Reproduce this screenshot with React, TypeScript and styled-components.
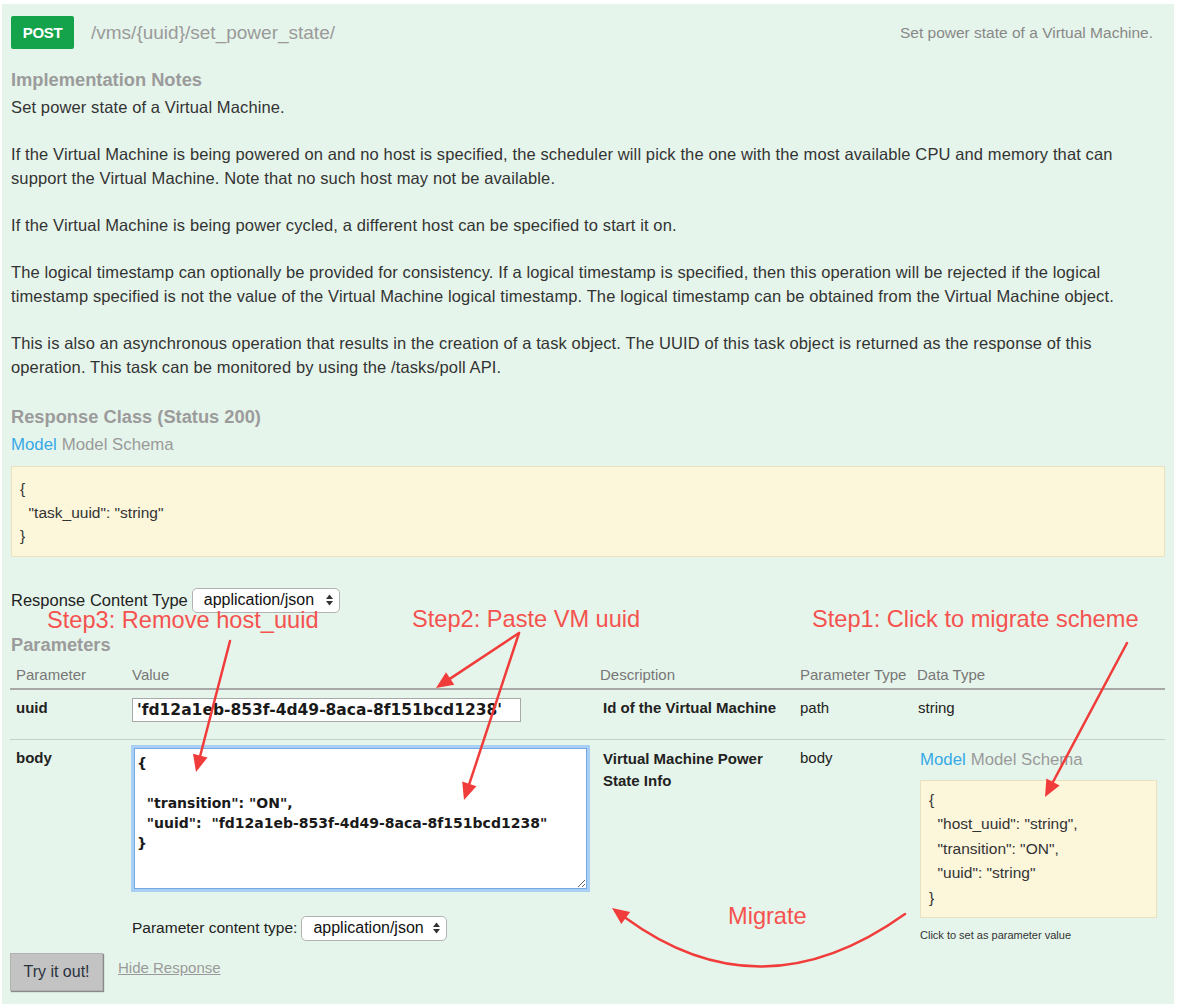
import React from "react";
import styled, { createGlobalStyle } from "styled-components";

const GlobalStyle = createGlobalStyle`
  html, body { margin: 0; padding: 0; background: #fff; }
  body { font-family: "Liberation Sans", Arial, Helvetica, sans-serif; color: #333; }
  * { box-sizing: border-box; }
`;

const Page = styled.div`
  position: relative;
  width: 1178px;
  min-height: 1004px;
  padding: 4px 4px 0 2px;
  display: flex;
`;

const Panel = styled.div`
  flex: 1;
  background: #e6f5eb;
  padding: 12px 9px 20px 9px;
  display: flex;
  flex-direction: column;
`;

const HeaderRow = styled.div`
  display: flex;
  align-items: center;
  height: 33px;
`;

const Badge = styled.span`
  display: inline-flex;
  align-items: center;
  justify-content: center;
  width: 63px;
  height: 33px;
  background: #14a34b;
  color: #fff;
  font-weight: 700;
  font-size: 15px;
  border-radius: 2px;
  letter-spacing: -0.3px;
`;

const PathText = styled.span`
  margin-left: 17px;
  font-size: 19px;
  color: #9a9a9a;
`;

const Summary = styled.span`
  margin-left: auto;
  margin-right: 12px;
  font-size: 15.5px;
  color: #888;
`;

const SectionTitle = styled.h4<{ $mt: number }>`
  margin: ${(p) => p.$mt}px 0 0 0;
  font-size: 18.3px;
  line-height: 22px;
  font-weight: 700;
  color: #9b9b9b;
`;

const Notes = styled.div`
  margin-top: 4px;
  display: flex;
  flex-direction: column;
  gap: 23px;
`;

const Para = styled.p`
  margin: 0;
  font-size: 16.5px;
  letter-spacing: 0.12px;
  line-height: 24px;
  color: #333;
  white-space: nowrap;
`;

const ModelTabs = styled.div<{ $mt: number }>`
  margin-top: ${(p) => p.$mt}px;
  font-size: 16.8px;
  line-height: 22px;
  display: flex;
  gap: 5px;
`;

const Tab = styled.span<{ $active?: boolean }>`
  color: ${(p) => (p.$active ? "#36a9e8" : "#9a9a9a")};
`;

const SchemaBox = styled.div<{ $compact?: boolean }>`
  margin-top: ${(p) => (p.$compact ? 9 : 10)}px;
  background: #fcf6db;
  border: 1px solid #e9e1c0;
  padding: ${(p) => (p.$compact ? "7px 8px" : "10px 8px 8px")};
  font-size: 15.5px;
  line-height: ${(p) => (p.$compact ? "24.5px" : "23.5px")};
  white-space: pre;
  color: #333;
`;

const ContentTypeRow = styled.div<{ $mt: number }>`
  margin-top: ${(p) => p.$mt}px;
  display: flex;
  align-items: center;
  gap: 4px;
`;

const FieldLabel = styled.span<{ $size: number }>`
  font-size: ${(p) => p.$size}px;
  color: #222;
`;

const FakeSelect = styled.div<{ $w: number }>`
  width: ${(p) => p.$w}px;
  height: 25px;
  display: inline-flex;
  align-items: center;
  justify-content: space-between;
  padding: 0 6px 0 11px;
  border: 1px solid #b3b3b3;
  border-radius: 5px;
  background: #fff;
  font-size: 16px;
  color: #111;
`;

const cols = "116px 468px 200px 117px 1fr";

const TableHead = styled.div`
  margin-left: -1px;
  display: grid;
  grid-template-columns: ${cols};
  border-bottom: 2px solid #a8a8a8;
  padding: 9px 0 3px;
`;

const HeadCell = styled.div`
  padding-left: 6px;
  font-size: 15px;
  line-height: 20px;
  color: #777;
  white-space: nowrap;
`;

const Row = styled.div<{ $divider?: boolean; $pb: number }>`
  margin-left: -1px;
  display: grid;
  grid-template-columns: ${cols};
  align-items: start;
  padding: 8px 0 ${(p) => p.$pb}px;
  border-bottom: ${(p) => (p.$divider ? "1px solid #c8cfc9" : "none")};
`;

const Cell = styled.div<{ $bold?: boolean; $lh?: number; $pl?: number }>`
  padding-left: ${(p) => p.$pl ?? 6}px;
  font-size: 15px;
  line-height: ${(p) => p.$lh ?? 20}px;
  font-weight: ${(p) => (p.$bold ? 700 : 400)};
  color: #222;
  display: flex;
  flex-direction: column;
  align-items: flex-start;
`;

const TextInput = styled.input`
  width: 389px;
  height: 24px;
  border: 1px solid #a9a9a9;
  background: #fff;
  padding: 0 4px;
  font-family: "DejaVu Sans", "Liberation Sans", sans-serif;
  font-size: 15.5px;
  font-weight: 700;
  color: #1a1a1a;
  outline: none;
`;

const BodyArea = styled.textarea`
  width: 453px;
  height: 141px;
  margin-left: 2px;
  border: 1px solid #74a9e4;
  box-shadow: 0 0 0 3px #a9cff5;
  background: #fff;
  padding: 4px 2px;
  font-family: "DejaVu Sans", "Liberation Sans", sans-serif;
  font-size: 14px;
  font-weight: 700;
  line-height: 20px;
  color: #1a1a1a;
  outline: none;
`;

const ClickHint = styled.div`
  margin-top: 10px;
  font-size: 11px;
  line-height: 14px;
  color: #333;
`;

const Actions = styled.div`
  margin-top: 7px;
  margin-left: -1px;
  display: flex;
  align-items: flex-start;
  gap: 15px;
`;

const TryButton = styled.button`
  width: 93px;
  height: 38px;
  background: #c3c3c3;
  border: 1px solid #b2b2b2;
  border-radius: 0;
  box-shadow: 1px 1px 1px #8a8a8a;
  font-family: "Liberation Sans", Arial, sans-serif;
  font-size: 16px;
  color: #2a3240;
  padding: 0;
`;

const HideLink = styled.a`
  margin-top: 5px;
  font-size: 15px;
  line-height: 20px;
  color: #9a9a9a;
  text-decoration: underline;
`;

const Overlay = styled.div`
  position: absolute;
  inset: 0;
  pointer-events: none;
`;

const Note = styled.span<{ $x: number; $y: number }>`
  position: absolute;
  left: ${(p) => p.$x}px;
  top: ${(p) => p.$y}px;
  font-size: 23.6px;
  line-height: 24px;
  color: #f5524f;
  white-space: nowrap;
`;

const ArrowSvg = styled.svg`
  position: absolute;
  left: 0;
  top: 0;
`;

const RED = "#f03c3a";

function head(tx: number, ty: number, dx: number, dy: number) {
  const len = Math.hypot(dx, dy);
  const ux = dx / len;
  const uy = dy / len;
  const L = 17;
  const W = 7.5;
  const bx = tx - ux * L;
  const by = ty - uy * L;
  const px = -uy * W;
  const py = ux * W;
  return {
    points: `${tx},${ty} ${bx + px},${by + py} ${bx - px},${by - py}`,
    bx,
    by,
  };
}

function Arrow({ x1, y1, x2, y2 }: { x1: number; y1: number; x2: number; y2: number }) {
  const h = head(x2, y2, x2 - x1, y2 - y1);
  return (
    <g>
      <line x1={x1} y1={y1} x2={h.bx} y2={h.by} stroke={RED} strokeWidth={2.5} strokeLinecap="round" />
      <polygon points={h.points} fill={RED} />
    </g>
  );
}

function CurveArrow() {
  const p0 = [905, 914];
  const p1 = [761, 1017];
  const p2 = [612, 908];
  const h = head(p2[0], p2[1], p2[0] - p1[0], p2[1] - p1[1]);
  return (
    <g>
      <path
        d={`M ${p0[0]} ${p0[1]} Q ${p1[0]} ${p1[1]} ${h.bx} ${h.by}`}
        stroke={RED}
        strokeWidth={2.5}
        fill="none"
        strokeLinecap="round"
      />
      <polygon points={h.points} fill={RED} />
    </g>
  );
}

const SelectArrows = () => (
  <svg width="7" height="12" viewBox="0 0 7 12">
    <polygon points="0,5 3.5,0.5 7,5" fill="#333" />
    <polygon points="0,7 3.5,11.5 7,7" fill="#333" />
  </svg>
);

const bodyJson = `{

  "transition": "ON",
  "uuid":  "fd12a1eb-853f-4d49-8aca-8f151bcd1238"
}`;

export default function App() {
  return (
    <>
      <GlobalStyle />
      <Page>
        <Panel>
          <HeaderRow>
            <Badge>POST</Badge>
            <PathText>/vms/{"{uuid}"}/set_power_state/</PathText>
            <Summary>Set power state of a Virtual Machine.</Summary>
          </HeaderRow>

          <SectionTitle $mt={20}>Implementation Notes</SectionTitle>
          <Notes>
            <Para>Set power state of a Virtual Machine.</Para>
            <Para>
              If the Virtual Machine is being powered on and no host is specified, the scheduler will pick the one with the most available CPU and memory that can
              <br />
              support the Virtual Machine. Note that no such host may not be available.
            </Para>
            <Para>If the Virtual Machine is being power cycled, a different host can be specified to start it on.</Para>
            <Para>
              The logical timestamp can optionally be provided for consistency. If a logical timestamp is specified, then this operation will be rejected if the logical
              <br />
              timestamp specified is not the value of the Virtual Machine logical timestamp. The logical timestamp can be obtained from the Virtual Machine object.
            </Para>
            <Para>
              This is also an asynchronous operation that results in the creation of a task object. The UUID of this task object is returned as the response of this
              <br />
              operation. This task can be monitored by using the /tasks/poll API.
            </Para>
          </Notes>

          <SectionTitle $mt={27}>Response Class (Status 200)</SectionTitle>
          <ModelTabs $mt={6}>
            <Tab $active>Model</Tab>
            <Tab>Model Schema</Tab>
          </ModelTabs>
          <SchemaBox>{`{\n  "task_uuid": "string"\n}`}</SchemaBox>

          <ContentTypeRow $mt={31}>
            <FieldLabel $size={16.5}>Response Content Type</FieldLabel>
            <FakeSelect $w={148}>
              application/json
              <SelectArrows />
            </FakeSelect>
          </ContentTypeRow>

          <SectionTitle $mt={21}>Parameters</SectionTitle>
          <TableHead>
            <HeadCell>Parameter</HeadCell>
            <HeadCell>Value</HeadCell>
            <HeadCell>Description</HeadCell>
            <HeadCell>Parameter Type</HeadCell>
            <HeadCell>Data Type</HeadCell>
          </TableHead>

          <Row $divider $pb={17}>
            <Cell $bold>uuid</Cell>
            <Cell>
              <TextInput readOnly defaultValue="'fd12a1eb-853f-4d49-8aca-8f151bcd1238'" />
            </Cell>
            <Cell $bold $pl={9}>Id of the Virtual Machine</Cell>
            <Cell>path</Cell>
            <Cell $pl={7}>string</Cell>
          </Row>

          <Row $pb={4}>
            <Cell $bold>body</Cell>
            <Cell>
              <BodyArea readOnly defaultValue={bodyJson} />
              <ContentTypeRow $mt={27}>
                <FieldLabel $size={15.5}>Parameter content type:</FieldLabel>
                <FakeSelect $w={146}>
                  application/json
                  <SelectArrows />
                </FakeSelect>
              </ContentTypeRow>
            </Cell>
            <Cell $bold $lh={22} $pl={9}>
              Virtual Machine Power
              <br />
              State Info
            </Cell>
            <Cell>body</Cell>
            <Cell $pl={9} $lh={22}>
              <ModelTabs $mt={1}>
                <Tab $active>Model</Tab>
                <Tab>Model Schema</Tab>
              </ModelTabs>
              <SchemaBox $compact style={{ width: 237 }}>
                {`{\n  "host_uuid": "string",\n  "transition": "ON",\n  "uuid": "string"\n}`}
              </SchemaBox>
              <ClickHint>Click to set as parameter value</ClickHint>
            </Cell>
          </Row>

          <Actions>
            <TryButton>Try it out!</TryButton>
            <HideLink>Hide Response</HideLink>
          </Actions>
        </Panel>

        <Overlay>
          <ArrowSvg width={1178} height={1004} viewBox="0 0 1178 1004">
            <Arrow x1={230} y1={641} x2={196} y2={772} />
            <Arrow x1={519} y1={633} x2={436} y2={688} />
            <Arrow x1={519} y1={633} x2={464} y2={800} />
            <Arrow x1={1127} y1={643} x2={1045} y2={797} />
            <CurveArrow />
          </ArrowSvg>
          <Note $x={47} $y={608}>Step3: Remove host_uuid</Note>
          <Note $x={412} $y={607}>Step2: Paste VM uuid</Note>
          <Note $x={812} $y={607}>Step1: Click to migrate scheme</Note>
          <Note $x={728} $y={904}>Migrate</Note>
        </Overlay>
      </Page>
    </>
  );
}
